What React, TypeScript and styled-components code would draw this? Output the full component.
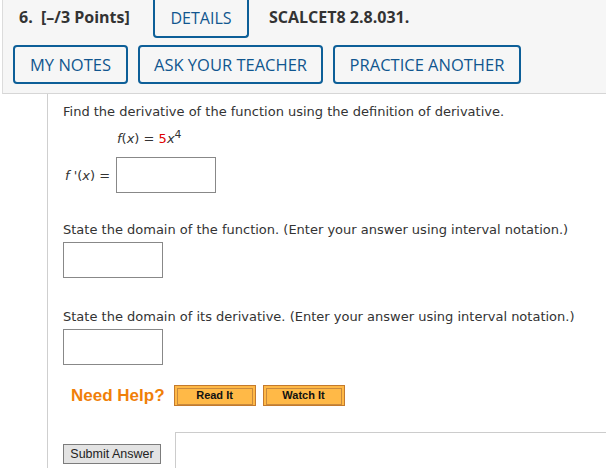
import styled, { createGlobalStyle } from "styled-components";

const Global = createGlobalStyle`
  body {
    margin: 0;
    background: #fff;
    font-family: "Open Sans", "Liberation Sans", sans-serif;
  }
`

const Header = styled.div`
  margin-left: 2px;
  height: 93px;
  background: #f6f6f6;
  border-left: 1px solid #dcdcdc;
  border-bottom: 1px solid #d6d6d6;
  box-sizing: content-box;
`

const TopRow = styled.div`
  display: flex;
  align-items: flex-start;
  height: 36px;
  padding-left: 16px;
`

const Title = styled.div`
  font-weight: 700;
  font-size: 16px;
  color: #333;
  line-height: 34px;
  width: 134px;
  white-space: pre;
`

const Tab = styled.div`
  width: 92px;
  height: 36px;
  margin-top: -2px;
  border: 2px solid #0d5f98;
  border-top: none;
  border-radius: 0 0 4px 4px;
  color: #11568f;
  font-size: 16px;
  display: flex;
  align-items: center;
  justify-content: center;
  padding-top: 2px;
  box-sizing: content-box;
`

const Code = styled.div`
  margin-left: 20px;
  font-weight: 700;
  font-size: 16px;
  color: #333;
  line-height: 34px;
`

const ButtonRow = styled.div`
  display: flex;
  gap: 10px;
  padding: 9px 0 0 10px;
`

const OutlineButton = styled.button<{ $w: number }>`
  width: ${p => p.$w}px;
  height: 39px;
  background: transparent;
  border: 2px solid #0d5f98;
  border-radius: 4px;
  color: #11568f;
  font-family: "Open Sans", "Liberation Sans", sans-serif;
  font-size: 16.5px;
  padding: 0;
`

const Body = styled.div`
  margin-left: 47px;
  border-left: 1px solid #cfcfcf;
  padding: 9px 0 0 15px;
  font-family: "DejaVu Sans", Verdana, sans-serif;
  font-size: 13px;
  color: #333;
`

const Para = styled.div<{ $top: number }>`
  margin-top: ${p => p.$top}px;
  line-height: 18px;
`

const Formula = styled.div`
  margin: 9px 0 0 54px;
  line-height: 18px;
  sup {
    line-height: 0;
  }
`

const Red = styled.span`
  color: #e00000;
`

const Answer = styled.div`
  display: flex;
  align-items: center;
  gap: 6px;
  margin-top: 9px;
  padding-left: 2px;
`

const Box = styled.div<{ $top?: number }>`
  width: 98px;
  height: 34px;
  border: 1px solid #888;
  margin-top: ${p => p.$top ?? 0}px;
  background: #fff;
`

const HelpRow = styled.div`
  display: flex;
  align-items: center;
  margin: 20px 0 0 8px;
  gap: 7px;
`

const HelpLabel = styled.div`
  font-family: "Liberation Sans", Arial, sans-serif;
  font-weight: bold;
  font-size: 17px;
  color: #f07f09;
  margin-right: 2px;
`

const HelpButton = styled.button`
  width: 82px;
  height: 21px;
  padding: 2px;
  border: 1px solid #c47a2c;
  background: #ffb947;
  font-family: "Liberation Sans", Arial, sans-serif;
  font-weight: bold;
  font-size: 11px;
  color: #111;
  span {
    display: block;
    height: 100%;
    border: 1px solid #c98a3c;
    line-height: 13px;
  }
`

const SubmitRow = styled.div`
  display: flex;
  align-items: flex-start;
  margin-top: 26px;
`

const Submit = styled.button`
  margin-top: 12px;
  width: 98px;
  height: 20px;
  padding: 0;
  background: #e3e3e3;
  border: 1px solid #7c7c7c;
  font-family: "Liberation Sans", Arial, sans-serif;
  font-size: 12.5px;
  color: #222;
`

const Feedback = styled.div`
  margin-left: 14px;
  flex: 1;
  height: 35px;
  border: 1px solid #cccccc;
  border-right: none;
  border-bottom: none;
`

export default function App() {
  return (
    <>
      <Global />
      <Header>
        <TopRow>
          <Title>6.  [–/3 Points]</Title>
          <Tab>DETAILS</Tab>
          <Code>SCALCET8 2.8.031.</Code>
        </TopRow>
        <ButtonRow>
          <OutlineButton $w={115}>MY NOTES</OutlineButton>
          <OutlineButton $w={185}>ASK YOUR TEACHER</OutlineButton>
          <OutlineButton $w={188}>PRACTICE ANOTHER</OutlineButton>
        </ButtonRow>
      </Header>
      <Body>
        <Para $top={0}>Find the derivative of the function using the definition of derivative.</Para>
        <Formula><i>f</i>(<i>x</i>) = <Red>5</Red><i>x</i><sup>4</sup></Formula>
        <Answer>
          <span><i>f</i> '(<i>x</i>) =</span>
          <Box />
        </Answer>
        <Para $top={28}>State the domain of the function. (Enter your answer using interval notation.)</Para>
        <Box $top={3} />
        <Para $top={30}>State the domain of its derivative. (Enter your answer using interval notation.)</Para>
        <Box $top={3} />
        <HelpRow>
          <HelpLabel>Need Help?</HelpLabel>
          <HelpButton><span>Read It</span></HelpButton>
          <HelpButton><span>Watch It</span></HelpButton>
        </HelpRow>
        <SubmitRow>
          <Submit>Submit Answer</Submit>
          <Feedback />
        </SubmitRow>
      </Body>
    </>
  )
}
